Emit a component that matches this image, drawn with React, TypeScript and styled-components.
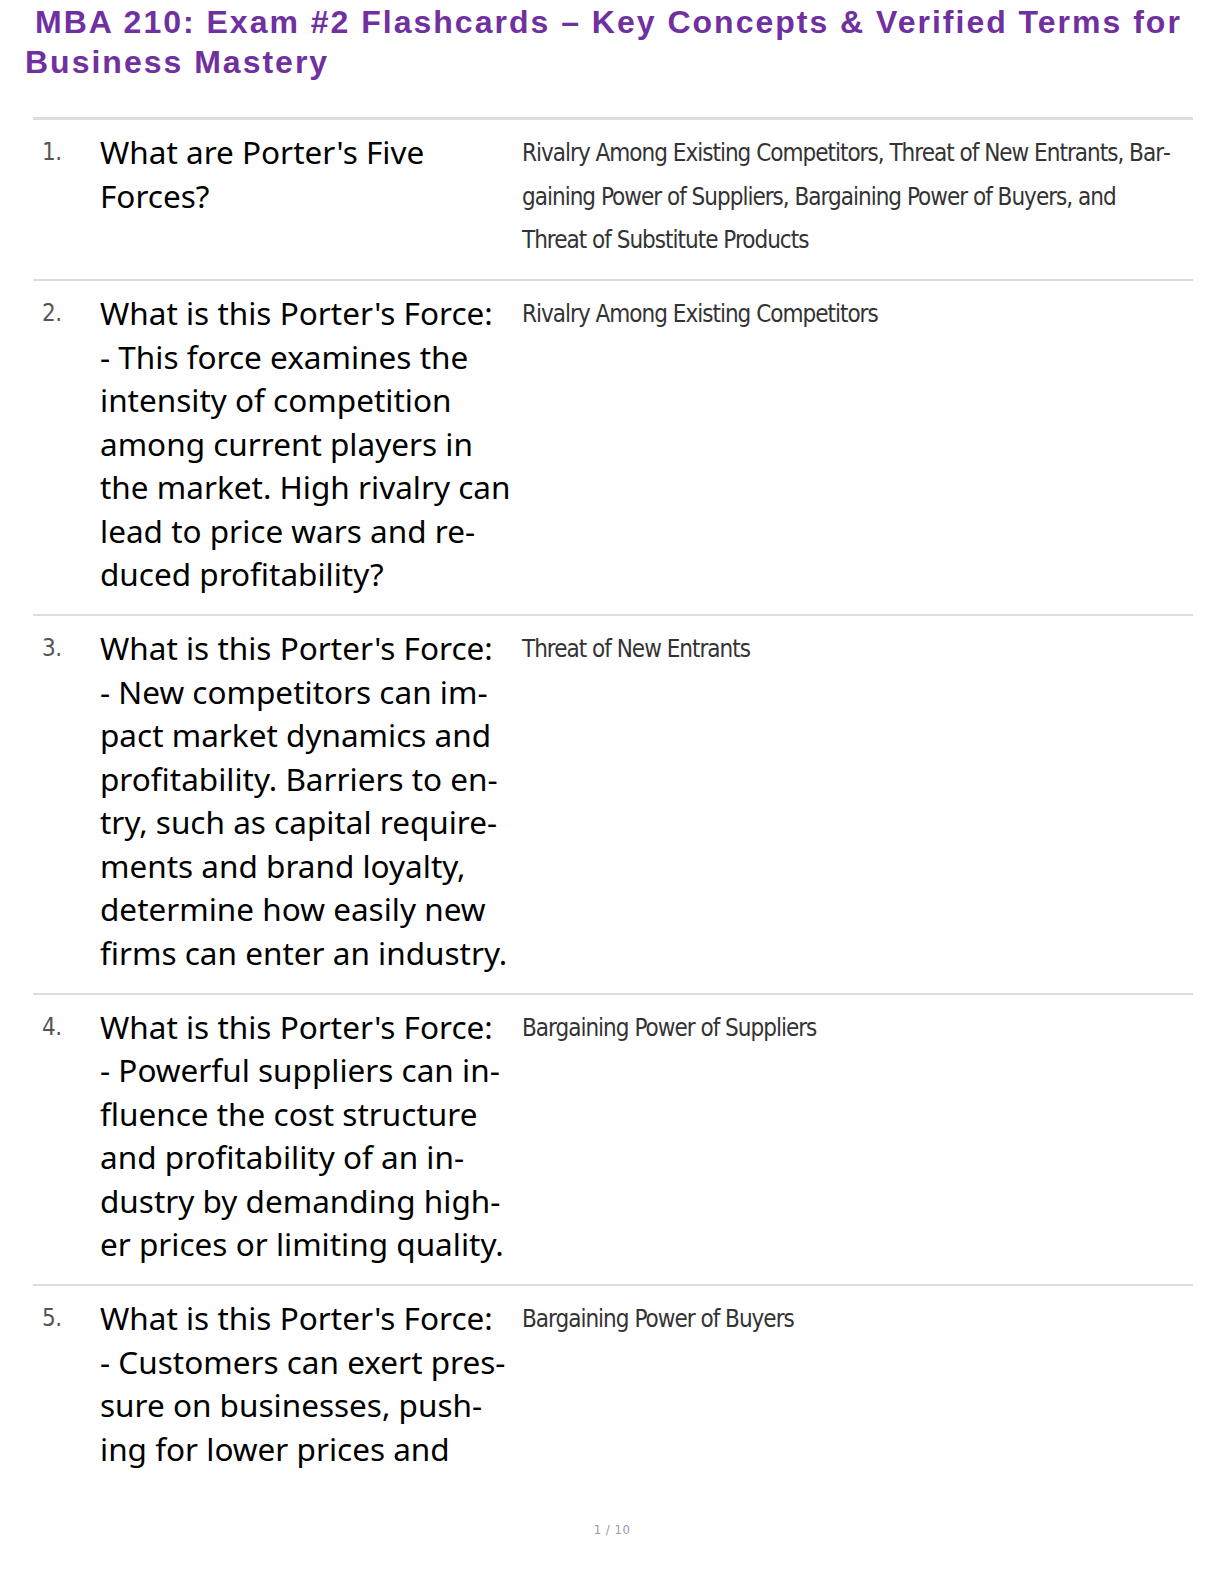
import styled, { createGlobalStyle } from 'styled-components'

const GlobalStyle = createGlobalStyle`
  body {
    margin: 0;
    background: #ffffff;
  }
`

type Card = {
  prompt: string
  detail?: string
  a: string
}

const FORCE = "What is this Porter's Force:"

// soft hyphens (\u00ad) mark where the source breaks words
const cards: Card[] = [
  {
    prompt: "What are Porter's Five Forces?",
    a: 'Rivalry Among Existing Competitors, Threat of New Entrants, Bar\u00adgaining Power of Suppliers, Bargaining Power of Buyers, and Threat of Substitute Products',
  },
  {
    prompt: FORCE,
    detail: '- This force examines the intensity of competition among current players in the market. High rivalry can lead to price wars and re\u00adduced profitability?',
    a: 'Rivalry Among Existing Competitors',
  },
  {
    prompt: FORCE,
    detail: '- New competitors can im\u00adpact market dynamics and profitability. Barriers to en\u00adtry, such as capital require\u00adments and brand loyalty, determine how easily new firms can enter an industry.',
    a: 'Threat of New Entrants',
  },
  {
    prompt: FORCE,
    detail: '- Powerful suppliers can in\u00adfluence the cost structure and profitability of an in\u00addustry by demanding high\u00ader prices or limiting quality.',
    a: 'Bargaining Power of Suppliers',
  },
  {
    prompt: FORCE,
    detail: '- Customers can exert pres\u00adsure on businesses, push\u00ading for lower prices and',
    a: 'Bargaining Power of Buyers',
  },
]

function App() {
  return (
    <Page>
      <GlobalStyle />
      <Title>
        <FirstLine>MBA 210: Exam #2 Flashcards – Key Concepts &amp; Verified Terms for</FirstLine>
        Business Mastery
      </Title>
      <CardList>
        {cards.map((card, i) => (
          <CardRow key={i} last={i === cards.length - 1}>
            <Num>{i + 1}.</Num>
            <Question>
              {card.prompt}
              {card.detail && <Detail>{card.detail}</Detail>}
            </Question>
            <Answer>{card.a}</Answer>
          </CardRow>
        ))}
      </CardList>
      <Footer>1 / 10</Footer>
    </Page>
  )
}

export default App

const Page = styled.div`
  width: 1224px;
  height: 1584px;
  box-sizing: border-box;
  padding: 3px 0 0 25px;
  display: flex;
  flex-direction: column;
  overflow: hidden;
`

const Title = styled.h1`
  margin: 0;
  font-family: 'Liberation Sans', Arial, sans-serif;
  font-weight: bold;
  font-size: 32px;
  letter-spacing: 2px;
  line-height: 39.5px;
  color: #7030a0;
`

const FirstLine = styled.span`
  display: block;
  padding-left: 10px;
`

const CardList = styled.div`
  margin: 35px 0 0 8px;
  width: 1160px;
  border-top: 3px solid #dcdce2;
`

const CardRow = styled.div<{ last?: boolean }>`
  display: grid;
  grid-template-columns: 67px 422px 1fr;
  padding: 10px 0 ${(p) => (p.last ? '0' : '18.5px')};
  border-bottom: ${(p) => (p.last ? 'none' : '2px solid #dcdce2')};
`

const narrow = `
  font-family: 'DejaVu Sans Condensed', 'DejaVu Sans', sans-serif;
  font-stretch: condensed;
  line-height: 43.5px;
`

const Num = styled.div`
  ${narrow}
  font-size: 24px;
  letter-spacing: -0.5px;
  padding: 1px 0 0 9px;
  color: #555555;
`

const Question = styled.div`
  font-family: 'Noto Sans', sans-serif;
  font-size: 31.5px;
  line-height: 43.5px;
  color: #000000;
  padding-right: 7px;
  hyphens: manual;
`

const Detail = styled.span`
  display: block;
`

const Answer = styled.div`
  ${narrow}
  font-size: 24px;
  letter-spacing: -1px;
  color: #333333;
  margin: 2px 0 -2px;
  padding-right: 12px;
  hyphens: manual;
`

const Footer = styled.div`
  margin-top: auto;
  margin-bottom: 47px;
  align-self: center;
  margin-left: -25px;
  font-family: 'DejaVu Sans Condensed', sans-serif;
  font-stretch: condensed;
  font-size: 13px;
  letter-spacing: 0.5px;
  color: #9a9aa6;
`
